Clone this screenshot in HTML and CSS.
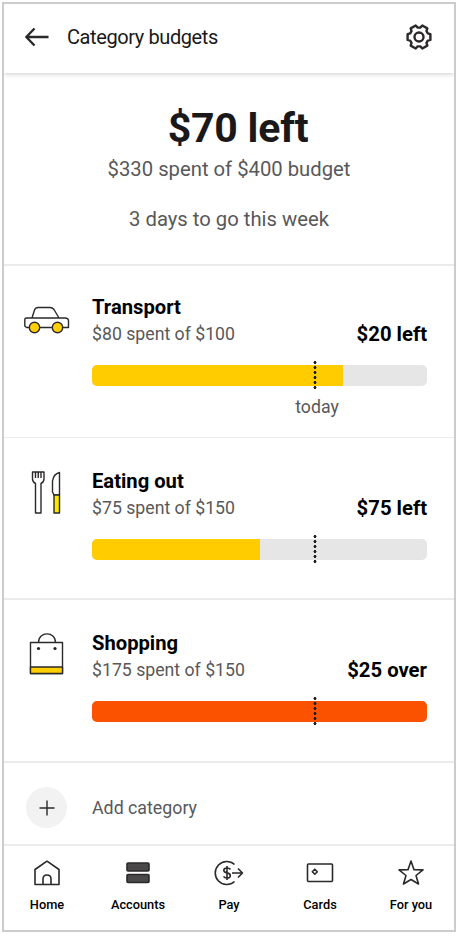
FILE: index.html
```html
<!DOCTYPE html>
<html lang="en">
<head>
    <meta charset="UTF-8">
    <meta name="viewport" content="width=device-width, initial-scale=1.0">
    <title>Category budgets</title>
    <link rel="stylesheet" href="styles.css">
</head>
<body>
<div class="screen">
    <header class="header">
        <svg class="back" width="26" height="20" viewBox="0 0 26 20"><path d="M23.500 10H1.500M9.500 1.500L1.300 10L9.500 18.500"/></svg>
        <h1>Category budgets</h1>
        <svg class="gear" width="26" height="26" viewBox="0 0 26 26">
            <path d="M24.400 10.100V15.900L21.800 16.600L20.500 18.800L21.300 21.600L16.300 24.500L14.300 22.400H11.700L9.700 24.500L4.700 21.600L5.500 18.800L4.200 16.600L1.600 15.900V10.100L4.200 9.400L5.500 7.200L4.700 4.400L9.700 1.500L11.700 3.600H14.300L16.300 1.500L21.300 4.400L20.500 7.200L21.800 9.400Z"/>
            <circle cx="13" cy="13" r="4.500"/>
        </svg>
    </header>

    <section class="summary">
        <h2>$70 left</h2>
        <p class="spent">$330 spent of $400 budget</p>
        <p class="days">3 days to go this week</p>
    </section>

    <section class="category transport">
        <svg class="icon" width="48" height="44" viewBox="0 0 48 44">
            <path d="M9 16L11.500 8Q12.500 5.500 15 5.500H27Q29.500 5.500 31 7.500L36 16M7 25.500H3.500L1.800 24V17.500Q1.800 16 3.500 16H42Q45.500 16 45.500 19V25.500H39.500M16 25.500H30"/>
            <circle class="wheel" cx="11.500" cy="25.500" r="5.200"/>
            <circle class="wheel" cx="34.500" cy="25.500" r="5.200"/>
        </svg>
        <div class="info">
            <h3>Transport</h3>
            <div class="row">
                <span>$80 spent of $100</span>
                <strong>$20 left</strong>
            </div>
            <div class="bar">
                <div class="fill" style="width: 75%"></div>
                <i class="marker"></i>
            </div>
            <div class="today">today</div>
        </div>
    </section>

    <section class="category eating">
        <svg class="icon" width="48" height="44" viewBox="0 0 48 44">
            <path d="M9.500 1H21V8Q21 11 18 12.500V42H12.500V12.500Q9.500 11 9.500 8ZM12.500 1V7M15.250 1V7M18 1V7"/>
            <path d="M36.500 1.500V24H31L29.500 21V10Q30.500 3 36.500 1.500Z"/>
            <path class="yellow" d="M31 24H36.500V42H31Z"/>
        </svg>
        <div class="info">
            <h3>Eating out</h3>
            <div class="row">
                <span>$75 spent of $150</span>
                <strong>$75 left</strong>
            </div>
            <div class="bar">
                <div class="fill" style="width: 50%"></div>
                <i class="marker"></i>
            </div>
        </div>
    </section>

    <section class="category shopping">
        <svg class="icon" width="48" height="44" viewBox="0 0 48 44">
            <path d="M7.500 10.500H39.500V41.500H7.500ZM15.500 10.500C15.500 -1 32.500 -1 32.500 10.500"/>
            <path class="gold" d="M7.500 35H39.500V41.500H7.500Z"/>
            <circle class="dot" cx="15.500" cy="16.500" r="1.600"/>
            <circle class="dot" cx="32" cy="16.500" r="1.600"/>
        </svg>
        <div class="info">
            <h3>Shopping</h3>
            <div class="row">
                <span>$175 spent of $150</span>
                <strong>$25 over</strong>
            </div>
            <div class="bar">
                <div class="fill over" style="width: 100%"></div>
                <i class="marker"></i>
            </div>
        </div>
    </section>

    <div class="add">
        <div class="plus">
            <svg width="16" height="16" viewBox="0 0 16 16"><path d="M8 .5V15.500M.5 8H15.500"/></svg>
        </div>
        <span>Add category</span>
    </div>

    <nav class="nav">
        <a>
            <svg width="32" height="28" viewBox="0 0 32 28"><path d="M4 25.500V10.500L16 2.200L28 10.500V25.500ZM12 25.500V20Q12 16 16 16T20 20V25.500"/></svg>
            <span>Home</span>
        </a>
        <a>
            <svg width="32" height="28" viewBox="0 0 32 28"><rect class="stack" x="5" y="4" width="22" height="8" rx="1"/><rect class="stack" x="5" y="15.500" width="22" height="8" rx="1"/></svg>
            <span>Accounts</span>
        </a>
        <a>
            <svg width="32" height="28" viewBox="0 0 32 28">
                <path d="M21.500 5.500A11.500 11.500 0 1 0 21.500 22.500M19 14H29.500M25 9.500L29.500 14L25 18.500"/>
                <path d="M17.500 10.500Q16.500 9 14 9Q10.800 9 10.800 11.300Q10.800 13.300 14 13.900Q17.300 14.500 17.300 16.700Q17.300 19 14 19Q11.500 19 10.500 17.300M14 7V21"/>
            </svg>
            <span>Pay</span>
        </a>
        <a>
            <svg width="32" height="28" viewBox="0 0 32 28"><rect x="3.500" y="5" width="25" height="17.500" rx="1"/><path d="M10.800 10.200L13.300 12.700L10.800 15.200L8.300 12.700Z"/></svg>
            <span>Cards</span>
        </a>
        <a>
            <svg width="32" height="28" viewBox="0 0 32 28"><path d="M16 2L19 10.700L28 10.900L21 16.500L23.500 25L16 20.500L8.500 25L11 16.500L4 10.900L13 10.700Z"/></svg>
            <span>For you</span>
        </a>
    </nav>
</div>
</body>
</html>
```

FILE: styles.css
```css
* {
    box-sizing: border-box;
    margin: 0;
    padding: 0;
}

body {
    background: #fff;
    font-family: Roboto, "Liberation Sans", sans-serif;
    color: #1a1819;
}

svg {
    display: block;
    flex: none;
    fill: none;
    stroke: #2b292a;
    stroke-width: 1.4;
    stroke-linejoin: round;
}

.screen {
    width: 454px;
    height: 930px;
    margin: 2px;
    border: 2px solid #ccc;
    display: flex;
    flex-direction: column;
    overflow: hidden;
}

.header {
    height: 69px;
    flex: none;
    display: flex;
    align-items: center;
    padding: 0 22px 3px 21px;
    box-shadow: 0 1px 5px rgba(0, 0, 0, .2);
}

.header svg {
    stroke-width: 2.4;
}

h1 {
    font-size: 20px;
    font-weight: 400;
    letter-spacing: -.4px;
    margin-left: 16px;
    flex: 1;
}

.summary {
    height: 193px;
    flex: none;
    text-align: center;
    border-bottom: 2px solid #ebebeb;
    color: #58585a;
    padding: 31px 0 0;
}

h2 {
    font-size: 41px;
    line-height: 48px;
    font-weight: 700;
    letter-spacing: -.2px;
    color: #1a1819;
    padding-left: 18px;
}

.summary p {
    font-size: 20.25px;
    line-height: 24px;
}

.summary .spent {
    margin-top: 5px;
}

.summary .days {
    margin-top: 26px;
}

.category {
    height: 162px;
    flex: none;
    display: flex;
    padding: 31px 27px 0 19px;
    border-bottom: 2px solid #ebebeb;
}

.transport {
    height: 172px;
    border-bottom-width: 1px;
    padding-top: 29px;
}

.shopping {
    height: 163px;
}

.icon {
    margin: 1px 21px 0 0;
}

.transport .icon {
    margin-top: 7px;
}

.eating .icon {
    margin-top: 2px;
}

.info {
    flex: 1;
}

h3 {
    font-size: 20.2px;
    line-height: 24px;
    font-weight: 700;
    color: #000;
}

.row {
    display: flex;
    justify-content: space-between;
    line-height: 24px;
    margin-top: 3px;
    font-size: 17.7px;
    color: #58585a;
}

.row strong {
    font-size: 20.3px;
    color: #000;
}

.bar {
    position: relative;
    height: 21px;
    margin-top: 19px;
    border-radius: 5px;
    background: #e6e6e6;
}

.fill {
    height: 100%;
    background: #fc0;
    border-radius: 5px 0 0 5px;
}

.over {
    background: #fb5200;
    border-radius: 5px;
}

/* today line over the bar */
.marker {
    position: absolute;
    left: 221px;
    top: -5px;
    width: 4px;
    height: 30px;
    background: radial-gradient(circle, #222 1.2px, transparent 1.8px) 0 0 / 4px 5px;
}

.today {
    width: 60px;
    margin: 9px 0 0 195px;
    text-align: center;
    font-size: 17.7px;
    line-height: 24px;
    color: #58585a;
}

.wheel,
.gold {
    fill: #ffcf00;
}

.yellow {
    fill: #ffe600;
}

.dot {
    fill: #222;
    stroke: none;
}

.add {
    height: 81px;
    flex: none;
    display: flex;
    align-items: center;
    padding: 8px 0 0 22px;
    font-size: 17.8px;
    color: #58585a;
}

.plus {
    width: 41px;
    height: 41px;
    border-radius: 50%;
    background: #f2f2f2;
    display: flex;
    align-items: center;
    justify-content: center;
    margin-right: 25px;
}

.nav {
    flex: 1;
    display: grid;
    grid-template-columns: repeat(5, 91px);
    justify-content: center;
    border-top: 2px solid #ebebeb;
    padding: 13px 0 0;
}

.nav a {
    display: flex;
    flex-direction: column;
    align-items: center;
    font-size: 12.8px;
    font-weight: 500;
    color: #000;
}

.nav svg {
    stroke-width: 1.6;
}

.nav span {
    margin-top: 10px;
    line-height: 16px;
}

.nav .stack {
    fill: #4a4849;
}
```
